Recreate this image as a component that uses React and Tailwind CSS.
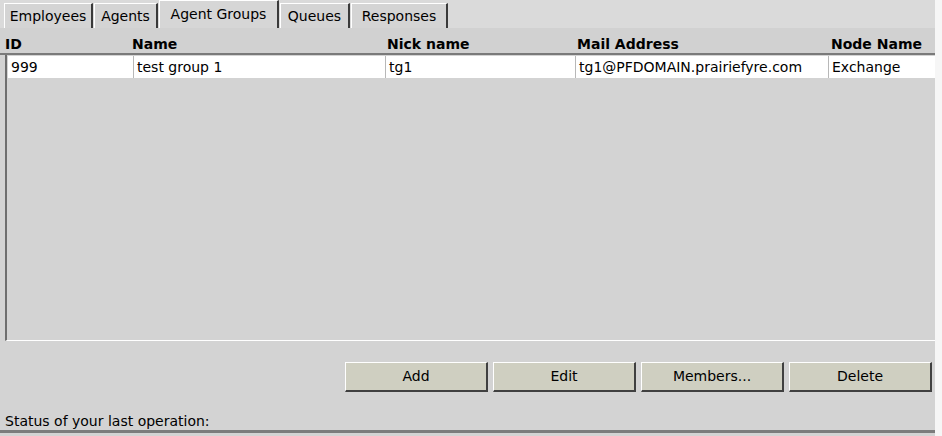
import React from 'react';

const tabs = [
  { label: 'Employees', w: 'w-[89px]' },
  { label: 'Agents', w: 'w-[64px]' },
  { label: 'Agent Groups', w: 'w-[120px]', active: true },
  { label: 'Queues', w: 'w-[70px]' },
  { label: 'Responses', w: 'w-[97px]' },
];

const groups = [
  { id: '999', name: 'test group 1', nick: 'tg1', mail: 'tg1@PFDOMAIN.prairiefyre.com', node: 'Exchange' },
];

const Tab = ({ label, w, active }) => (
  <div
    className={`${w} flex items-center justify-center border-l border-t border-white border-r-2 border-r-[#3a3a3a] ${
      active ? 'h-[28px] pb-[1px] bg-[#d6d6d6]' : 'h-[25px] pt-[1px] bg-[#d4d4d4]'
    }`}
  >
    <span className="text-[14px] text-black">{label}</span>
  </div>
);

const Button = ({ children }) => (
  <button className="w-[143px] h-[30px] bg-[#cfcfc1] border-l border-t border-white border-r-2 border-b-2 border-r-[#404040] border-b-[#404040] text-[14px] text-black">
    {children}
  </button>
);

export default function App() {
  return (
    <div className="w-[942px] h-[436px] bg-[#f6f6f6] font-['DejaVu_Sans',sans-serif]">
      <div className="w-[935px] h-[436px] flex flex-col bg-[#d3d3d3]">
        {/* tab strip */}
        <div className="h-[28px] flex items-end pl-[4px] gap-[1px] bg-[#dadada]">
          {tabs.map((t) => (
            <Tab key={t.label} {...t} />
          ))}
        </div>

        {/* column headers */}
        <div className="h-[27px] flex items-center border-b-2 border-[#7a7a7a] bg-[#d1d1d1] font-bold text-[14px] text-black pt-[7px]">
          <div className="w-[132px] pl-[5px]">ID</div>
          <div className="w-[255px]">Name</div>
          <div className="w-[190px]">Nick name</div>
          <div className="w-[254px]">Mail Address</div>
          <div className="flex-1">Node Name</div>
        </div>

        {/* list */}
        <div className="h-[286px] ml-[5px] border-l-2 border-[#6e6e6e] border-b border-b-white">
          {groups.map((g) => (
            <div key={g.id} className="h-[22px] mt-[1px] ml-[1px] flex bg-white text-[14px] text-black leading-[22px]">
              <div className="w-[126px] pl-[3px] border-r border-[#b8b8b8]">{g.id}</div>
              <div className="w-[252px] pl-[3px] border-r border-[#b8b8b8]">{g.name}</div>
              <div className="w-[190px] pl-[3px] border-r border-[#b8b8b8]">{g.nick}</div>
              <div className="w-[253px] pl-[3px] border-r border-[#b8b8b8]">{g.mail}</div>
              <div className="flex-1 pl-[3px]">{g.node}</div>
            </div>
          ))}
        </div>

        {/* actions */}
        <div className="mt-[21px] flex justify-end gap-[5px] pr-[3px]">
          <Button>Add</Button>
          <Button>Edit</Button>
          <Button>Members...</Button>
          <Button>Delete</Button>
        </div>

        <div className="mt-[20px] pl-[5px] text-[14px] text-black leading-[18px]">Status of your last operation:</div>
        <div className="h-[3px] bg-[#7c7c7c]" />
      </div>
    </div>
  );
}
